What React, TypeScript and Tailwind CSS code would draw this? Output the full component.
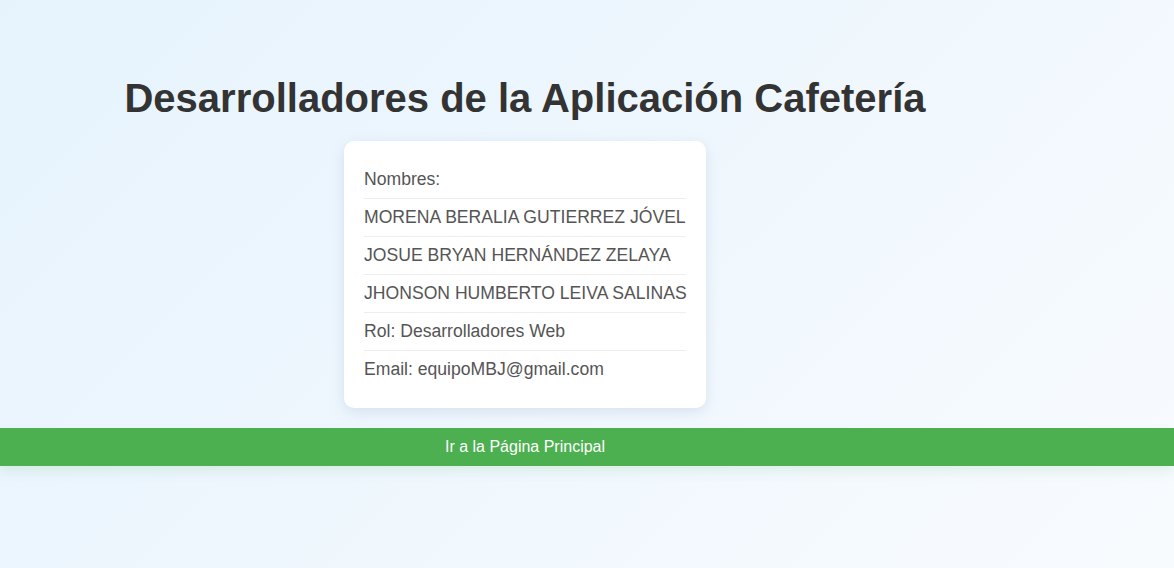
const ROWS = [
  "Nombres:",
  "MORENA BERALIA GUTIERREZ JÓVEL",
  "JOSUE BRYAN HERNÁNDEZ ZELAYA",
  "JHONSON HUMBERTO LEIVA SALINAS",
  "Rol: Desarrolladores Web",
  "Email: equipoMBJ@gmail.com",
];

export default function App() {
  return (
    <div className="min-h-[568px] w-full bg-[linear-gradient(135deg,#e6f3fd_0%,#f8fbfe_100%)] font-['Liberation_Sans',Arial,sans-serif] overflow-hidden">
      <div className="w-[1050px] flex flex-col items-center pt-[75px]">
        <h1 className="text-[40px] font-bold text-[#333333] leading-[46px]">
          Desarrolladores de la Aplicación Cafetería
        </h1>
      </div>
      <div className="w-[1050px] flex justify-center mt-[20px]">
        <div className="w-[362px] bg-white rounded-[10px] px-5 py-5 shadow-[0_4px_14px_rgba(100,130,170,0.18)]">
          <ul>
            {ROWS.map((row, i) => (
              <li
                key={row}
                className={
                  "py-2 text-[17.6px] leading-[21px] text-[#555555] whitespace-nowrap " +
                  (i < ROWS.length - 1 ? "border-b border-[#eeeeee]" : "")
                }
              >
                {row}
              </li>
            ))}
          </ul>
        </div>
      </div>
      <button className="mt-[20px] w-full h-[38px] bg-[#4caf50] text-white text-[16px] shadow-[0_6px_12px_rgba(76,175,80,0.12)] text-left">
        <span className="block w-[1050px] text-center">Ir a la Página Principal</span>
      </button>
    </div>
  );
}
